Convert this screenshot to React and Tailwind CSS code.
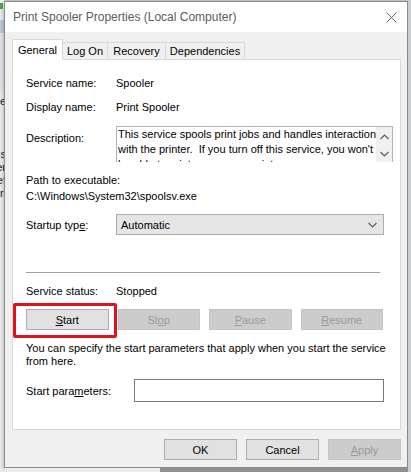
import React from 'react';

const Chevron = ({ up = false, className = '' }) => (
    <svg width="9" height="6" viewBox="0 0 9 6" className={className}>
        <polyline
            points={up ? '0.5,5 4.5,1 8.5,5' : '0.5,1 4.5,5 8.5,1'}
            fill="none"
            stroke="#606060"
            strokeWidth="1.2"
        />
    </svg>
);

const Button = ({ children, disabled = false, className = '' }) => (
    <div
        className={`h-[21px] flex items-center justify-center border ${
            disabled ? 'bg-[#cccccc] border-[#c4c4c4] text-[#9a9a9a]' : 'bg-[#e1e1e1] border-[#adadad] text-black'
        } ${className}`}
    >
        {children}
    </div>
);

const Row = ({ label, children, className = '' }) => (
    <div className={`flex ${className}`}>
        <div className="w-[90px] shrink-0">{label}</div>
        <div className="flex-1">{children}</div>
    </div>
);

const App = () => {
    return (
        <div className="w-[411px] h-[472px] bg-[#d6d9dd] flex overflow-hidden font-['Liberation_Sans',Arial,sans-serif] text-[11px] leading-[14px] text-black">
            {/* background window, mostly hidden */}
            <div className="w-[4px] shrink-0 flex flex-col overflow-hidden bg-[#f3f3f3] text-[#222]">
                <div className="h-[3px]" />
                <div className="h-[6px] w-[3px] bg-[#3bb54a]" />
                <div className="h-[11px]" />
                <div className="h-[13px] bg-[#c3d0de]" />
                <div className="h-[60px] bg-[#e9edf2]" />
                <div className="flex flex-col items-end leading-[13px] mt-[2px]">
                    <span className="mr-[-2px]">e</span>
                    <span className="mr-[-2px] mt-[40px]">s</span>
                    <span className="mr-[-2px]">er</span>
                    <span className="mr-[-2px]">ef</span>
                    <span className="mr-[-2px]">ri</span>
                </div>
            </div>

            <div className="w-[404px] shrink-0 flex flex-col">
                <div className="h-[1px] bg-[#cfcfcf]" />
                {/* dialog window */}
                <div className="h-[467px] flex flex-col border border-[#8a8a8a] bg-[#f0f0f0] shadow-[0_2px_6px_rgba(0,0,0,0.35)]">
                    {/* title bar */}
                    <div className="h-[30px] bg-white flex items-center justify-between pl-[8px] pr-[10px]">
                        <span className="text-[12px] text-[#5c5c5c]">Print Spooler Properties (Local Computer)</span>
                        <svg width="11" height="11" viewBox="0 0 11 11">
                            <path d="M0.5 0.5 L10.5 10.5 M10.5 0.5 L0.5 10.5" stroke="#6a6a6a" strokeWidth="1" />
                        </svg>
                    </div>

                    <div className="flex-1 flex flex-col pl-[7px] pr-[6px] pt-[7px]">
                        {/* tabs */}
                        <div className="h-[20px] flex items-end">
                            <div className="h-[21px] w-[51px] bg-white border border-b-0 border-[#d9d9d9] flex items-center justify-center relative top-[1px] z-10">
                                General
                            </div>
                            <div className="h-[17px] w-[45px] border border-l-0 border-b-0 border-[#d9d9d9] flex items-center justify-center">
                                Log On
                            </div>
                            <div className="h-[17px] w-[58px] border border-l-0 border-b-0 border-[#d9d9d9] flex items-center justify-center">
                                Recovery
                            </div>
                            <div className="h-[17px] w-[79px] border border-l-0 border-b-0 border-[#d9d9d9] flex items-center justify-center">
                                Dependencies
                            </div>
                        </div>

                        {/* General panel */}
                        <div className="h-[371px] bg-white border border-[#d9d9d9] pl-[13px] pr-[17px] pt-[16px] flex flex-col">
                            <Row label="Service name:">Spooler</Row>
                            <Row label="Display name:" className="mt-[10px]">Print Spooler</Row>

                            <Row label={<div className="pt-[5px]">Description:</div>} className="mt-[12px]">
                                <div className="h-[36px] flex border border-b-0 border-[#b4b4b4] overflow-hidden">
                                    <div className="flex-1 pl-[1px] leading-[15px] whitespace-pre overflow-hidden">
                                        <div>This service spools print jobs and handles interaction</div>
                                        <div>with the printer.  If you turn off this service, you won't</div>
                                        <div>be able to print or see your printers.</div>
                                    </div>
                                    <div className="w-[16px] bg-[#f0f0f0] flex flex-col items-center pt-[7px] gap-[11px]">
                                        <Chevron up />
                                        <Chevron />
                                    </div>
                                </div>
                            </Row>

                            <div className="mt-[11px]">Path to executable:</div>
                            <div className="mt-[2px]">C:\Windows\System32\spoolsv.exe</div>

                            <Row
                                label={
                                    <div className="h-[21px] flex items-center">
                                        <span>
                                            Startup typ<u>e</u>:
                                        </span>
                                    </div>
                                }
                                className="mt-[11px]"
                            >
                                <div className="h-[21px] bg-[#e5e5e5] border border-[#adadad] flex items-center justify-between pl-[4px] pr-[6px] mr-[-1px]">
                                    <span>Automatic</span>
                                    <Chevron />
                                </div>
                            </Row>

                            <div className="mt-[37px] h-[1px] bg-[#a0a0a0] mr-[3px]" />

                            <Row label="Service status:" className="mt-[11px]">Stopped</Row>

                            <div className="mt-[11px] grid grid-cols-4 gap-[9px]">
                                <div className="relative">
                                    <Button>
                                        <span>
                                            <u>S</u>tart
                                        </span>
                                    </Button>
                                    <div className="absolute left-[-13px] right-[-8px] top-[-6px] bottom-[-8px] border-[3px] border-[#e0121c] rounded-[2px]" />
                                </div>
                                <Button disabled>
                                    <span>
                                        St<u>o</u>p
                                    </span>
                                </Button>
                                <Button disabled>
                                    <span>
                                        <u>P</u>ause
                                    </span>
                                </Button>
                                <Button disabled>
                                    <span>
                                        <u>R</u>esume
                                    </span>
                                </Button>
                            </div>

                            <div className="mt-[12px] leading-[13px] whitespace-nowrap">
                                <div>You can specify the start parameters that apply when you start the service</div>
                                <div>from here.</div>
                            </div>

                            <div className="mt-[11px] flex items-center">
                                <div className="w-[108px] shrink-0">
                                    Start para<u>m</u>eters:
                                </div>
                                <div className="flex-1 h-[23px] border border-[#7a7a7a] mr-[-1px]" />
                            </div>
                        </div>

                        {/* dialog buttons */}
                        <div className="mt-[9px] flex justify-end gap-[9px]">
                            <Button className="w-[73px] h-[21px]">OK</Button>
                            <Button className="w-[73px] h-[21px]">Cancel</Button>
                            <Button disabled className="w-[73px] h-[21px]">
                                <span>
                                    <u>A</u>pply
                                </span>
                            </Button>
                        </div>
                    </div>
                </div>
                <div className="flex-1 flex">
                    <div className="w-[156px] bg-[#ececec]" />
                    <div className="flex-1 bg-[#8f8f8f]" />
                </div>
            </div>
            <div className="flex-1 bg-[#c9ced6]" />
        </div>
    );
};

export default App;
